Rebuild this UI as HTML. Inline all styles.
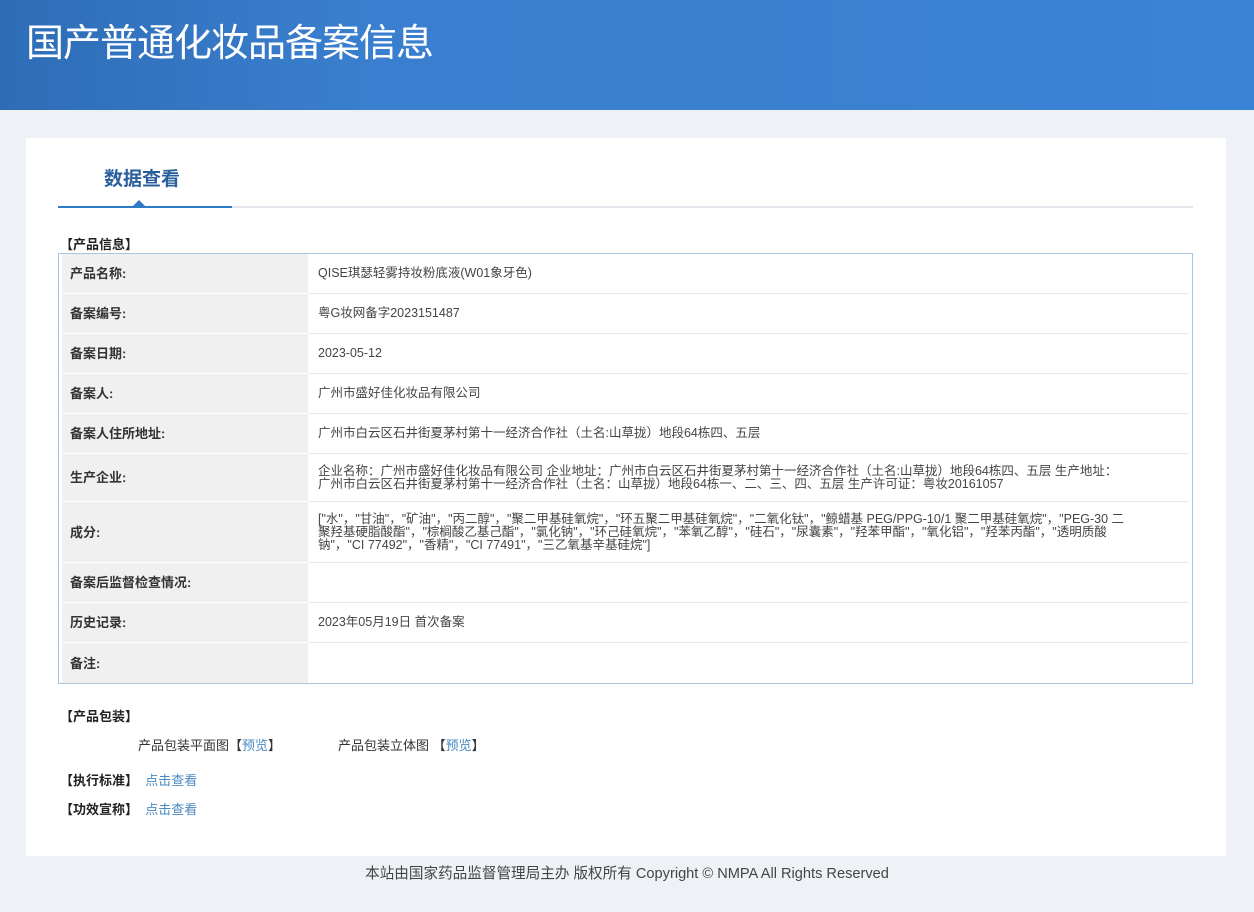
<!DOCTYPE html>
<html><head><meta charset="utf-8">
<style>
*{margin:0;padding:0;box-sizing:border-box}
body{width:1254px;height:912px;background:#eef2f6;font-family:"Liberation Sans","Noto Sans CJK SC",sans-serif;color:#333;position:relative;overflow:hidden}
.hd{position:absolute;left:0;top:0;width:1254px;height:110px;background:linear-gradient(90deg,#2e6db6 0%,#3a7fcf 30%,#3b80cf 60%,#3a84d6 100%)}
.hd h1{position:absolute;left:26px;top:12px;font-size:38px;font-weight:normal;color:#fff;letter-spacing:-1px}
.panel{position:absolute;left:26px;top:138px;width:1200px;height:718px;background:#fff}
.tab{position:absolute;left:78px;top:26px;font-size:19px;font-weight:bold;color:#2a5f9e}
.tl{position:absolute;left:32px;top:68px;width:1135px;height:2px;background:#e4e7ec}
.tb{position:absolute;left:32px;top:68px;width:174px;height:2px;background:#2e7ac6}
.tri{position:absolute;left:107px;top:62px;width:0;height:0;border-left:6px solid transparent;border-right:6px solid transparent;border-bottom:6px solid #2e7ac6}
.sec{position:absolute;font-size:13px;font-weight:bold;color:#222}
table{position:absolute;left:32px;top:115px;width:1135px;border:1px solid #a9c4e0;border-collapse:separate;border-spacing:0;padding:0 3px;font-size:13px}
td{border-bottom:1px solid #e8e8e8;padding:0 8px;vertical-align:middle;line-height:13px}
td.l{width:246px;background:#f0f0f0;font-weight:bold;color:#333;border-bottom:1px solid #fff}
tr:last-child td{border-bottom:none}
td.v{color:#444;font-size:12.5px;padding-left:10px;padding-right:60px;word-break:break-all}
.lk{color:#4a88c0}
.ft{position:absolute;left:0;width:1254px;top:862px;text-align:center;font-size:14.6px;color:#444}
</style></head><body>
<div class="hd"><h1>国产普通化妆品备案信息</h1></div>
<div class="panel">
<div class="tab">数据查看</div>
<div class="tl"></div><div class="tb"></div><div class="tri"></div>
<div class="sec" style="left:34px;top:96px">【产品信息】</div>
<table>
<tr style="height:40px"><td class="l">产品名称:</td><td class="v">QISE琪瑟轻雾持妆粉底液(W01象牙色)</td></tr>
<tr style="height:40px"><td class="l">备案编号:</td><td class="v">粤G妆网备字2023151487</td></tr>
<tr style="height:40px"><td class="l">备案日期:</td><td class="v">2023-05-12</td></tr>
<tr style="height:40px"><td class="l">备案人:</td><td class="v">广州市盛好佳化妆品有限公司</td></tr>
<tr style="height:40px"><td class="l">备案人住所地址:</td><td class="v">广州市白云区石井街夏茅村第十一经济合作社（土名:山草拢）地段64栋四、五层</td></tr>
<tr style="height:48px"><td class="l">生产企业:</td><td class="v">企业名称：广州市盛好佳化妆品有限公司 企业地址：广州市白云区石井街夏茅村第十一经济合作社（土名:山草拢）地段64栋四、五层 生产地址：广州市白云区石井街夏茅村第十一经济合作社（土名：山草拢）地段64栋一、二、三、四、五层 生产许可证：粤妆20161057</td></tr>
<tr style="height:61px"><td class="l">成分:</td><td class="v">["水"，"甘油"，"矿油"，"丙二醇"，"聚二甲基硅氧烷"，"环五聚二甲基硅氧烷"，"二氧化钛"，"鲸蜡基 PEG/PPG-10/1 聚二甲基硅氧烷"，"PEG-30 二聚羟基硬脂酸酯"，"棕榈酸乙基己酯"，"氯化钠"，"环己硅氧烷"，"苯氧乙醇"，"硅石"，"尿囊素"，"羟苯甲酯"，"氧化铝"，"羟苯丙酯"，"透明质酸钠"，"CI 77492"，"香精"，"CI 77491"，"三乙氧基辛基硅烷"]</td></tr>
<tr style="height:40px"><td class="l">备案后监督检查情况:</td><td class="v"></td></tr>
<tr style="height:40px"><td class="l">历史记录:</td><td class="v">2023年05月19日 首次备案</td></tr>
<tr style="height:40px"><td class="l">备注:</td><td class="v"></td></tr>
</table>
<div class="sec" style="left:34px;top:568px">【产品包装】</div>
<div style="position:absolute;left:112px;top:597px;font-size:13px;color:#333">产品包装平面图【<span class="lk">预览</span>】</div>
<div style="position:absolute;left:312px;top:597px;font-size:13px;color:#333">产品包装立体图 【<span class="lk">预览</span>】</div>
<div class="sec" style="left:34px;top:632px">【执行标准】&nbsp; <span class="lk" style="font-weight:normal">点击查看</span></div>
<div class="sec" style="left:34px;top:661px">【功效宣称】&nbsp; <span class="lk" style="font-weight:normal">点击查看</span></div>
</div>
<div class="ft">本站由国家药品监督管理局主办 版权所有 Copyright © NMPA All Rights Reserved</div>
</body></html>
